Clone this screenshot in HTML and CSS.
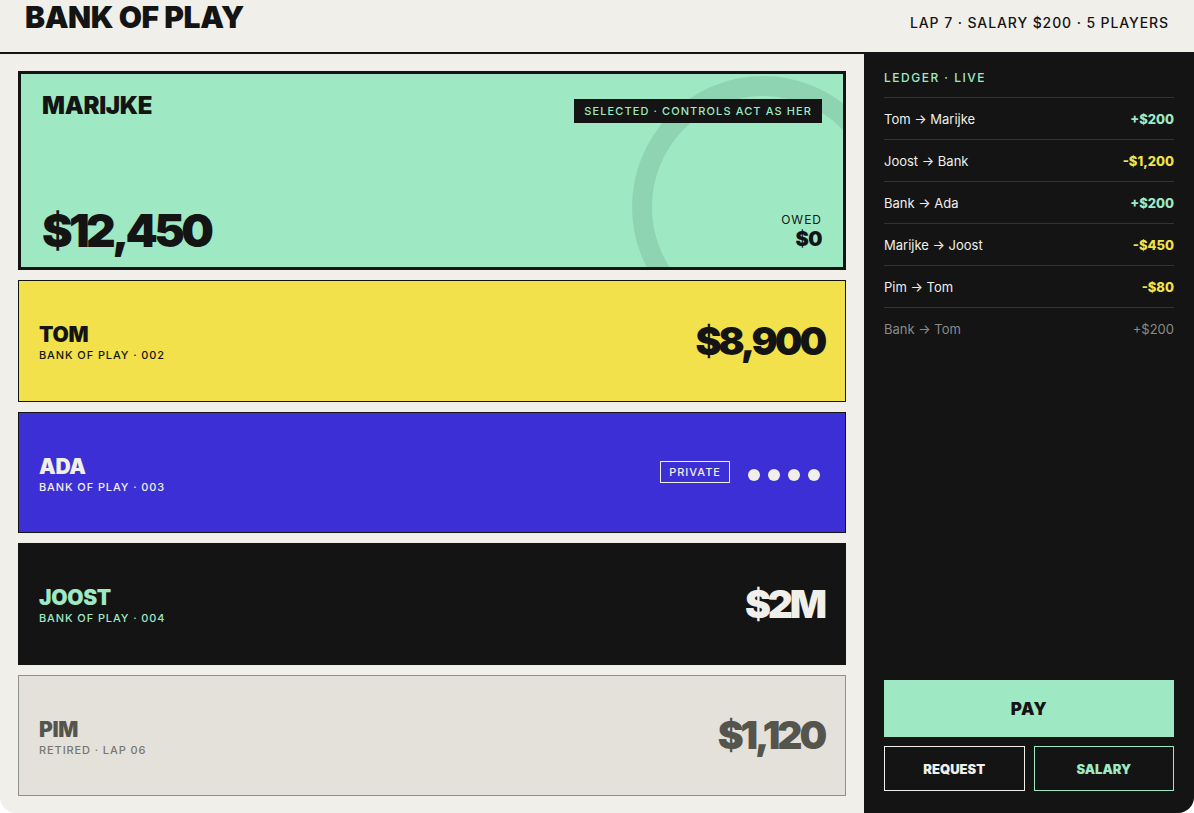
FILE: index.html
```html
<!DOCTYPE html>
<html lang="en">
<head>
<meta charset="utf-8">
<title>Bank of Play</title>
<link rel="stylesheet" href="styles.css">
</head>
<body>
<div class="app">
  <header class="topbar">
    <h1 class="brand">BANK OF PLAY</h1>
    <div class="meta">LAP 7 · SALARY $200 · 5 PLAYERS</div>
  </header>
  <main class="main">
    <section class="cards">
      <article class="card card-selected">
        <div class="ring"></div>
        <div class="sel-top">
          <h2 class="name name-lg">MARIJKE</h2>
          <span class="sel-badge">SELECTED · CONTROLS ACT AS HER</span>
        </div>
        <div class="sel-bottom">
          <div class="amount amount-lg">$12,450</div>
          <div class="owed">
            <div class="owed-label">OWED</div>
            <div class="owed-value">$0</div>
          </div>
        </div>
      </article>
      <article class="card card-yellow">
        <div class="who">
          <h2 class="name">TOM</h2>
          <div class="sub">BANK OF PLAY · 002</div>
        </div>
        <div class="amount">$8,900</div>
      </article>
      <article class="card card-blue">
        <div class="who">
          <h2 class="name">ADA</h2>
          <div class="sub">BANK OF PLAY · 003</div>
        </div>
        <div class="private">
          <span class="private-badge">PRIVATE</span>
          <span class="dots"><i></i><i></i><i></i><i></i></span>
        </div>
      </article>
      <article class="card card-dark">
        <div class="who">
          <h2 class="name">JOOST</h2>
          <div class="sub">BANK OF PLAY · 004</div>
        </div>
        <div class="amount">$2M</div>
      </article>
      <article class="card card-retired">
        <div class="who">
          <h2 class="name">PIM</h2>
          <div class="sub">RETIRED · LAP 06</div>
        </div>
        <div class="amount">$1,120</div>
      </article>
    </section>
    <aside class="ledger">
      <div class="ledger-title">LEDGER · LIVE</div>
      <ul class="rows">
        <li class="row"><span>Tom → Marijke</span><b class="plus">+$200</b></li>
        <li class="row"><span>Joost → Bank</span><b class="minus">-$1,200</b></li>
        <li class="row"><span>Bank → Ada</span><b class="plus">+$200</b></li>
        <li class="row"><span>Marijke → Joost</span><b class="minus">-$450</b></li>
        <li class="row"><span>Pim → Tom</span><b class="minus">-$80</b></li>
        <li class="row row-dim"><span>Bank → Tom</span><b>+$200</b></li>
      </ul>
      <div class="actions">
        <button class="btn btn-pay">PAY</button>
        <div class="btn-pair">
          <button class="btn btn-request">REQUEST</button>
          <button class="btn btn-salary">SALARY</button>
        </div>
      </div>
    </aside>
  </main>
</div>
</body>
</html>
```
FILE: styles.css
```css
* { box-sizing: border-box; margin: 0; padding: 0; }
html, body { background: #ffffff; }
body {
  font-family: Inter, "Noto Sans", sans-serif;
  color: #141414;
}
.app {
  width: 1194px;
  height: 813px;
  background: #f0efea;
  border-radius: 0 0 16px 16px;
  overflow: hidden;
  display: flex;
  flex-direction: column;
}
.topbar {
  height: 54px;
  border-bottom: 2px solid #141414;
  display: flex;
  justify-content: space-between;
  align-items: baseline;
  padding: 0 25px;
  flex: none;
}
.brand {
  font-size: 30px;
  line-height: 35px;
  font-weight: 900;
  letter-spacing: -0.4px;
}
.meta {
  font-size: 14px;
  font-weight: 500;
  letter-spacing: 0.9px;
}
.main {
  flex: 1;
  display: flex;
  gap: 18px;
  min-height: 0;
}
.cards {
  flex: 1;
  padding: 17px 0 17px 18px;
  display: grid;
  grid-template-rows: 199px repeat(4, 1fr);
  gap: 10px;
}
.card {
  position: relative;
  overflow: hidden;
  border: 1px solid #141414;
  display: flex;
  align-items: center;
  justify-content: space-between;
  padding: 0 19px 0 20px;
}
.who { margin-top: 4px; }
.name {
  font-size: 21px;
  line-height: 24px;
  font-weight: 900;
  letter-spacing: -0.3px;
}
.sub {
  font-size: 11px;
  line-height: 14px;
  font-weight: 500;
  letter-spacing: 0.9px;
  margin-top: 1px;
}
.amount {
  font-size: 39px;
  line-height: 44px;
  font-weight: 900;
  letter-spacing: -0.08em;
  padding-right: 2px;
}
.card-selected {
  background: #9ee9c4;
  border: 3px solid #141414;
  flex-direction: column;
  align-items: stretch;
  padding: 17px 21px 13px 21px;
}
.ring {
  position: absolute;
  top: 2px;
  right: -51px;
  width: 262px;
  height: 262px;
  border-radius: 50%;
  border: 20px solid rgba(0, 0, 0, 0.09);
}
.sel-top, .sel-bottom {
  position: relative;
  display: flex;
  justify-content: space-between;
}
.sel-top { align-items: flex-start; }
.sel-bottom { align-items: flex-end; }
.name-lg { font-size: 24px; line-height: 29px; }
.sel-badge {
  margin-top: 8px;
  background: #141414;
  color: #9ee9c4;
  font-size: 11px;
  font-weight: 500;
  letter-spacing: 1.1px;
  line-height: 24px;
  padding: 0 10px;
}
.amount-lg { font-size: 46px; line-height: 48px; padding-right: 0; }
.owed { text-align: right; margin-bottom: 4px; }
.owed-label { font-size: 12px; line-height: 14px; letter-spacing: 1px; font-weight: 400; }
.owed-value { font-size: 20px; line-height: 22px; font-weight: 900; margin-top: 1px; letter-spacing: -0.5px; }
.card-yellow { background: #f2e14a; }
.card-blue { background: #3d2fd6; color: #f0efea; }
.card-dark { background: #141414; border-color: #141414; }
.card-dark .name, .card-dark .sub { color: #9ee9c4; }
.card-dark .amount { color: #f0efea; }
.card-retired { background: #e4e1da; border-color: #8d8f88; }
.card-retired .name { color: #55554d; }
.card-retired .sub { color: #77776f; }
.card-retired .amount { color: #55554e; }
.private {
  display: flex;
  align-items: center;
  gap: 18px;
  margin-right: 6px;
  margin-top: 0;
}
.private-badge {
  border: 1.5px solid #f0efea;
  font-size: 11px;
  font-weight: 500;
  letter-spacing: 1px;
  line-height: 20px;
  padding: 0 8px;
}
.dots { display: flex; gap: 8px; margin-top: 5px; }
.dots i {
  display: block;
  width: 12px;
  height: 12px;
  border-radius: 50%;
  background: #f0efea;
}
.ledger {
  width: 330px;
  flex: none;
  background: #141414;
  color: #f0efea;
  padding: 16px 20px 22px 20px;
  display: flex;
  flex-direction: column;
}
.ledger-title {
  color: #9ee9c4;
  font-size: 12px;
  line-height: 16px;
  font-weight: 500;
  letter-spacing: 1.5px;
  padding-bottom: 11px;
  border-bottom: 1px solid #333333;
}
.rows { list-style: none; }
.row {
  height: 42px;
  display: flex;
  align-items: center;
  justify-content: space-between;
  border-bottom: 1px solid #333333;
  font-size: 13px;
}
.row:last-child { border-bottom: none; }
.row b { font-weight: 800; }
.row .plus { color: #9ee9c4; }
.row .minus { color: #f2e14a; }
.row-dim { color: #8a8a84; }
.row-dim b { font-weight: 400; }
.actions {
  margin-top: auto;
  display: flex;
  flex-direction: column;
  gap: 9px;
}
.btn {
  font-family: Inter, "Noto Sans", sans-serif;
  font-weight: 900;
  cursor: pointer;
  background: transparent;
}
.btn-pay {
  height: 57px;
  background: #9ee9c4;
  border: none;
  color: #141414;
  font-size: 17px;
  letter-spacing: 0.5px;
}
.btn-pair { display: flex; gap: 9px; }
.btn-pair .btn {
  flex: 1;
  height: 45px;
  font-size: 13px;
  letter-spacing: 0;
}
.btn-request { border: 1.5px solid #f0efea; color: #f0efea; }
.btn-salary { border: 1.5px solid #9ee9c4; color: #9ee9c4; }
```
